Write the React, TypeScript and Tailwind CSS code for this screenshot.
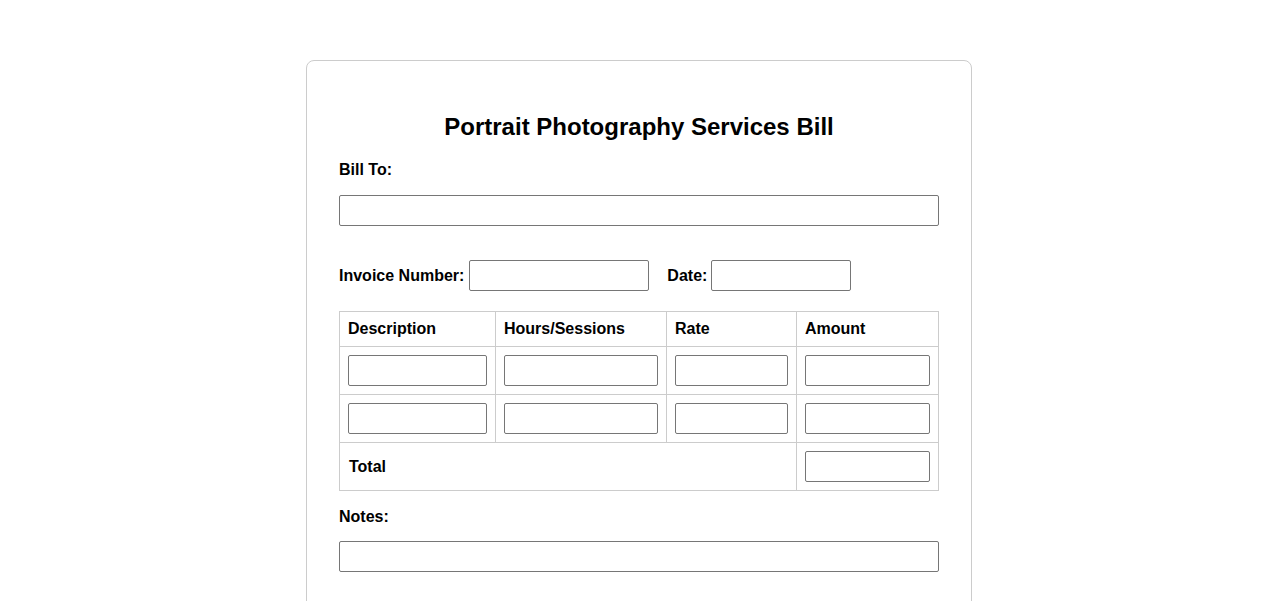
const inputCls = "block w-full h-[31px] border border-[#767676] rounded-[2px] bg-white px-1";

const Cell = ({ children }: { children?: React.ReactNode }) => (
  <td className="border border-[#ccc] p-2 align-middle">{children}</td>
);

const App = () => {
  const rows = [0, 1];
  return (
    <div className="min-h-screen bg-white pt-[60px] text-black font-['Liberation_Sans',Arial,sans-serif] leading-[normal]">
      <div className="mx-auto w-[666px] border border-[#ccc] rounded-lg px-[32px] pt-[52px] pb-[48px]">
        <h1 className="text-[24px] font-bold text-center leading-[normal]">
          Portrait Photography Services Bill
        </h1>

        <label className="block mt-[20px] text-[16px] font-bold">Bill To:</label>
        <input type="text" className={inputCls + " mt-[16px]"} />

        <div className="flex items-center mt-[34px] text-[16px] font-bold">
          <label>Invoice Number:</label>
          <input type="text" className="ml-[5px] w-[180px] h-[31px] border border-[#767676] rounded-[2px] bg-white px-1" />
          <label className="ml-[18px]">Date:</label>
          <input type="text" className="ml-[4px] w-[140px] h-[31px] border border-[#767676] rounded-[2px] bg-white px-1" />
        </div>

        <table className="mt-[20px] w-[600px] table-fixed border-collapse text-[16px] leading-[normal]">
          <colgroup>
            <col className="w-[156px]" />
            <col className="w-[171px]" />
            <col className="w-[130px]" />
            <col className="w-[142px]" />
          </colgroup>
          <thead>
            <tr>
              <th className="border border-[#ccc] p-2 text-left font-bold">Description</th>
              <th className="border border-[#ccc] p-2 text-left font-bold">Hours/Sessions</th>
              <th className="border border-[#ccc] p-2 text-left font-bold">Rate</th>
              <th className="border border-[#ccc] p-2 text-left font-bold">Amount</th>
            </tr>
          </thead>
          <tbody>
            {rows.map((r) => (
              <tr key={r}>
                <Cell><input type="text" className={inputCls} /></Cell>
                <Cell><input type="text" className={inputCls} /></Cell>
                <Cell><input type="text" className={inputCls} /></Cell>
                <Cell><input type="text" className={inputCls} /></Cell>
              </tr>
            ))}
            <tr>
              <td colSpan={3} className="border border-[#ccc] p-2 pl-[9px] font-bold align-middle">Total</td>
              <Cell><input type="text" className={inputCls} /></Cell>
            </tr>
          </tbody>
        </table>

        <label className="block mt-[17px] text-[16px] font-bold">Notes:</label>
        <input type="text" className={inputCls + " mt-[15px]"} />
      </div>
    </div>
  );
};

export default App;
